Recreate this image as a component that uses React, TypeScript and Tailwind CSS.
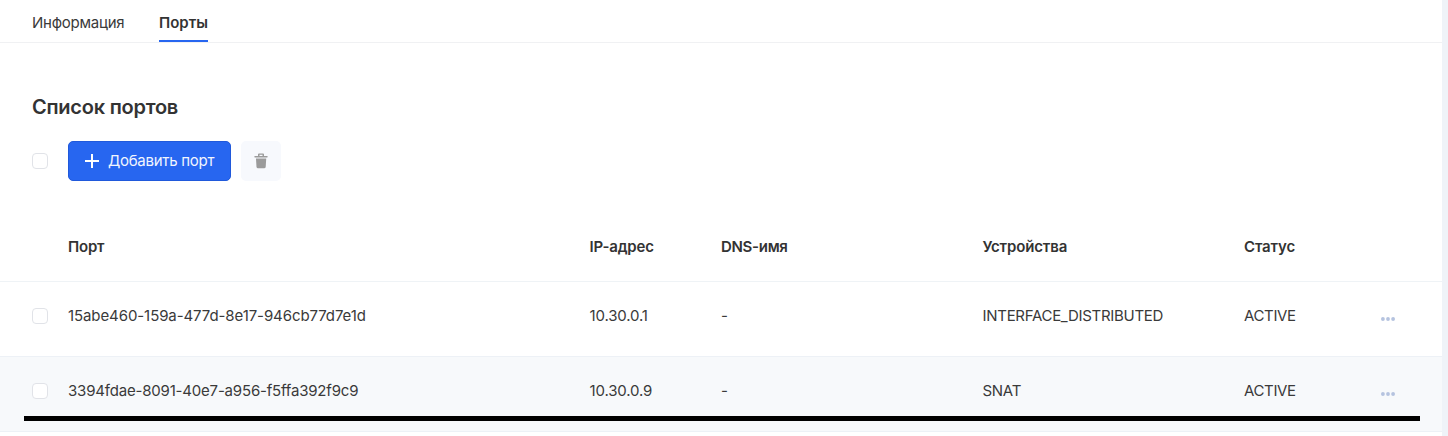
import React from "react";

type Port = { id: string; idTracking: string; ip: string; dns: string; device: string; status: string };

const ports: Port[] = [
  { id: "15abe460-159a-477d-8e17-946cb77d7e1d", idTracking: "tracking-[-0.09px]", ip: "10.30.0.1", dns: "-", device: "INTERFACE_DISTRIBUTED", status: "ACTIVE" },
  { id: "3394fdae-8091-40e7-a956-f5ffa392f9c9", idTracking: "tracking-[-0.19px]", ip: "10.30.0.9", dns: "-", device: "SNAT", status: "ACTIVE" },
];

const columns = "grid grid-cols-[36px_521.5px_131.5px_261.5px_261.5px_135.5px_1fr] items-center pl-8";

function Checkbox() {
  return <span role="checkbox" aria-checked="false" className="block size-4 shrink-0 rounded-[4px] border border-[#e1e3e8] bg-white" />;
}

function TrashIcon() {
  return (
    <svg width="14" height="16" viewBox="0 0 14 16" fill="#9b9b9b">
      <path fillRule="evenodd" d="M4 3V1.5Q4 .5 5 .5h4q1 0 1 1V3h3q.7 0 .7.8t-.7.8H1Q.3 4.600.3 3.800T1 3ZM5.500 3h3V1.700h-3Z" />
      <path d="M2 5.500h10.200l-.5 8.300q-.1 1.500-1.600 1.500H4.100q-1.500 0-1.600-1.500Z" />
    </svg>
  );
}

function MoreIcon() {
  return (
    <svg width="16" height="6" viewBox="0 0 16 6" fill="#b5c3df">
      <circle cx="2.9" cy="3" r="1.9" />
      <circle cx="8" cy="3" r="1.9" />
      <circle cx="13.1" cy="3" r="1.9" />
    </svg>
  );
}

export default function App() {
  return (
    <div className="flex h-[436px] w-full overflow-hidden bg-[#eff3f8] pr-1.5 font-[Inter,sans-serif] text-[15px] leading-6 font-normal text-[#3a3a3a]">
      <main className="relative flex min-w-0 flex-1 flex-col bg-white">
        <nav className="flex h-[43px] shrink-0 gap-[35px] border-b border-[#f0f1f3] pl-8">
          <a className="h-[42px] w-[92px] pt-[11px] tracking-[-0.25px] whitespace-nowrap">Информация</a>
          <a className="h-[42px] border-b-2 border-[#2766f0] pt-[11px] font-semibold text-[#333333]">Порты</a>
        </nav>

        <h1 className="mt-[50px] pl-8 text-xl leading-7 font-semibold tracking-[-0.24px] text-[#333333]">Список портов</h1>

        <div className="mt-5 flex h-10 shrink-0 items-center pl-8">
          <Checkbox />
          <button className="ml-5 flex h-10 w-[163px] items-center rounded-[5px] border border-[#2059db] bg-[#2766f0] pl-4 text-[#f1f5fe]">
            <svg width="14" height="14" viewBox="0 0 14 14" stroke="white" strokeWidth="2">
              <path d="M0 7h14M7 0v14" />
            </svg>
            <span className="ml-[9px] tracking-[-0.28px] whitespace-nowrap">Добавить порт</span>
          </button>
          <button className="ml-2.5 flex size-10 items-center justify-center rounded-[5px] bg-[#f7f9fd]">
            <TrashIcon />
          </button>
        </div>

        <section className="mt-[31px]">
          <div className={`${columns} h-[70px] border-b border-[#eff3f6] font-semibold tracking-[-0.2px] text-[#333333]`}>
            <span />
            <span>Порт</span>
            <span>IP-адрес</span>
            <span className="tracking-[-0.3px]">DNS-имя</span>
            <span className="tracking-[-0.15px]">Устройства</span>
            <span className="tracking-[-0.15px]">Статус</span>
          </div>
          {ports.map((port) => (
            <div key={port.id} className={`${columns} h-[75px] border-b border-[#edf1f6] pb-[6px] even:bg-white odd:bg-[#f7f9fb]`}>
              <Checkbox />
              <span className={port.idTracking}>{port.id}</span>
              <span className="tracking-[-0.15px]">{port.ip}</span>
              <span>{port.dns}</span>
              <span className="tracking-[-0.29px]">{port.device}</span>
              <span className="tracking-[-0.35px]">{port.status}</span>
              <span className="pt-[6px]"><MoreIcon /></span>
            </div>
          ))}
        </section>
        <div className="absolute top-[416px] left-6 h-[5px] w-[1396px] bg-black" />
      </main>
    </div>
  );
}
